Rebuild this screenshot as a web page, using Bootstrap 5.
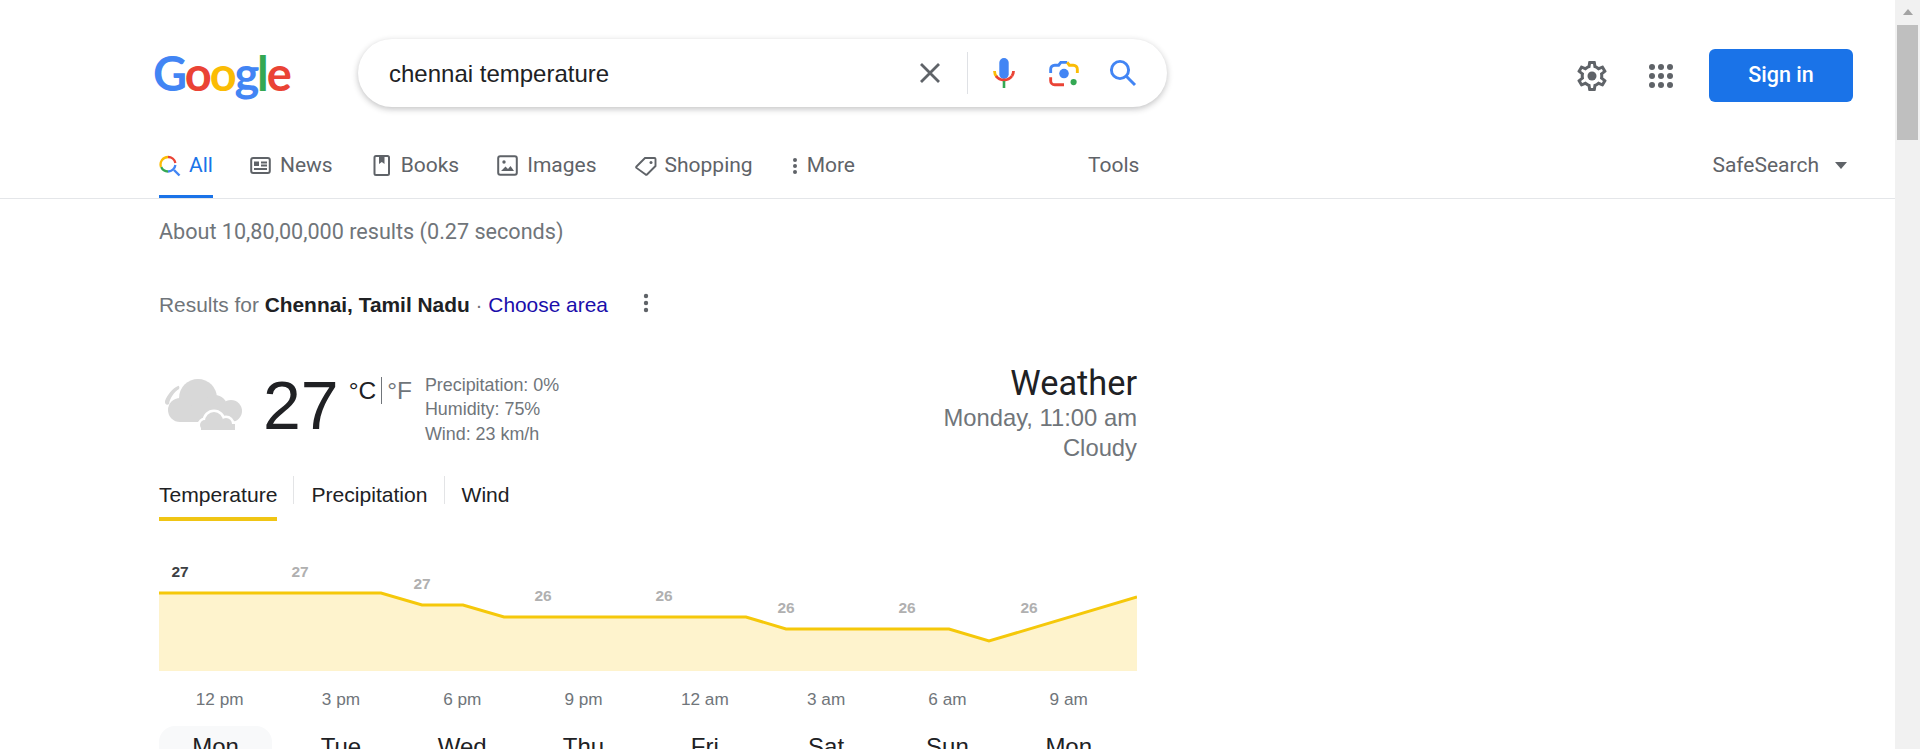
<!DOCTYPE html>
<html lang="en">
<head>
  <meta charset="UTF-8">
  <title>chennai temperature - Google Search</title>
  <link href="https://cdn.jsdelivr.net/npm/bootstrap@5.3.2/dist/css/bootstrap.min.css" rel="stylesheet">
  <style>
    html, body { height: 749px; overflow: hidden; }
    body { font-family: "Liberation Sans", Arial, sans-serif; color: #202124; background: #fff; }
    a { text-decoration: none; }

    .top-row { height: 120px; padding: 39px 67px 0 153px; align-items: flex-start; }
    .g-logo { width: 137px; height: 68px; margin-right: 68px; font-family: "Lato", sans-serif; font-size: 47px; font-weight: 700; line-height: 68px; letter-spacing: -2.1px; }
    .c-blue { color: #4285f4; } .c-red { color: #ea4335; } .c-yellow { color: #fbbc05; } .c-green { color: #34a853; }
    .search-pill { width: 809px; height: 68px; border-radius: 34px; background: #fff; box-shadow: 0 2px 6px rgba(32,33,36,.28); padding: 0 30px 0 31px; }
    .search-text { font-size: 24px; color: #202124; flex: 1; margin-top: 1px; }
    .pill-sep { width: 1px; height: 42px; background: #dfe1e5; margin: 0 23px 0 26px; }
    .lens-gap { margin-left: 31px; }
    .glass-gap { margin-left: 29px; }
    .top-right { margin-left: auto; margin-top: 10px; height: 53px; }
    .grid-gap { margin-left: 38px; }
    .signin-btn { width: 144px; height: 53px; margin-left: 35px; background: #1a73e8; color: #fff; border: 0; border-radius: 6px; font-family: "Roboto", sans-serif; font-size: 21.5px; font-weight: 500; }

    .tab-strip { height: 79px; padding: 0 46px 0 159px; border-bottom: 1px solid #e4e6e9; margin-right: 25px; font-family: "Roboto", sans-serif; font-size: 21px; color: #5f6368; }
    .tab-item { height: 78px; padding-top: 31px; color: #5f6368; white-space: nowrap; line-height: 28px; }
    .tab-on { color: #1a73e8; border-bottom: 3px solid #1a73e8; }
    .tab-strip svg { flex: none; }
    .tools-item { margin-left: auto; }
    .tab-news { margin-left: 37px; gap: 9px; } .tab-news svg { margin-top: 5px; }
    .tab-books { margin-left: 40px; gap: 10px; } .tab-books svg { margin-top: 4px; }
    .tab-images { margin-left: 38px; gap: 9px; } .tab-images svg { margin-top: 4px; }
    .tab-shop { margin-left: 38px; gap: 8px; } .tab-shop svg { margin-top: 5px; }
    .tab-more { margin-left: 39px; gap: 9px; } .tab-more svg { margin-top: 6px; }
    .tab-tools { margin-left: 233px; }
    .safe-caret { margin: 11px 2px 0 16px; }

    .main-col { width: 978px; margin-left: 159px; }
    .stats-line { margin-top: 18px; height: 30px; line-height: 30px; color: #70757a; font-family: "Roboto", sans-serif; font-size: 21.6px; white-space: nowrap; }
    .loc-line { margin-top: 43px; height: 30px; font-size: 20.9px; color: #70757a; }
    .loc-line b { color: #202124; }
    .loc-line a { color: #1a0dab; }
    .loc-dots { margin: -4px 0 0 35px; }
    .wx-head { margin-top: 45px; height: 105px; }
    .wx-cloud { flex: none; margin: 13px 0 0 4px; }
    .wx-temp { font-size: 68px; line-height: 80px; color: #202124; margin: 0 0 0 18px; }
    .wx-unit { font-size: 24.5px; line-height: 26px; margin-top: 13px; margin-left: 10px; color: #202124; }
    .wx-unit span + span { border-left: 1px solid #70757a; color: #70757a; margin-left: 5px; padding-left: 5px; }
    .wx-stats { margin-left: 13px; margin-top: 8px; color: #70757a; font-size: 17.9px; line-height: 24.4px; }
    .wx-title { text-align: right; color: #70757a; font-size: 23.8px; line-height: 30px; margin-top: -2px; }
    .wx-title div:first-child { font-family: "Roboto", sans-serif; color: #202124; font-size: 34.3px; line-height: 40px; }

    .chart-tabs { height: 51px; font-size: 21.1px; color: #202124; }
    .ctab { height: 51px; line-height: 34px; padding-top: 8px; }
    .ctab-on { border-bottom: 4px solid #f0c514; }
    .ctab-sep { width: 1px; height: 28px; background: #e3e4e6; margin: 6px 17px 0 16px; }
    .chart-box { display: block; }
    .hours-row { font-size: 17.2px; color: #70757a; margin-top: 16px; height: 24px; line-height: 24px; }
    .hours-row > div, .days-row > div { width: 121.3px; text-align: center; }
    .days-row { margin-top: 15px; font-size: 24px; color: #202124; }
    .day-cell { padding-top: 6px; height: 100px; line-height: 30px; }
    .day-now { background: #f8f9fa; border-radius: 16px; width: 113px !important; margin-right: 8.3px; }

    .fake-scroll { position: fixed; top: 0; right: 0; width: 25px; height: 749px; background: #f1f1f1; }
    .fake-thumb { position: absolute; top: 25px; right: 2px; width: 21px; height: 115px; background: #bfbfbf; }
    .fake-arrow { position: absolute; top: 9px; left: 8px; width: 0; height: 0; border-left: 5.5px solid transparent; border-right: 5.5px solid transparent; border-bottom: 6px solid #a3a3a3; }
  </style>
</head>
<body>

  <!-- Search bar -->
  <div class="top-row d-flex">
    <div class="g-logo"><span class="c-blue">G</span><span class="c-red">o</span><span class="c-yellow">o</span><span class="c-blue">g</span><span class="c-green">l</span><span class="c-red">e</span></div>
    <div class="search-pill d-flex align-items-center">
      <div class="search-text">chennai temperature</div>
      <svg width="22" height="22" viewBox="0 0 22 22"><path d="M2 2l18 18M20 2L2 20" stroke="#5f6368" stroke-width="2.8" fill="none"/></svg>
      <div class="pill-sep"></div>
      <svg width="26" height="32" viewBox="0 0 26 32">
        <rect x="8.3" y="1" width="9.4" height="21" rx="4.7" fill="#4285f4"/>
        <path d="M3.500 14c0 2.500 .8 4.500 2.400 6" stroke="#fbbc05" stroke-width="2.800" fill="none"/>
        <path d="M5 19c2 2.700 4.800 4 8 4s6-1.300 8-4" stroke="#ea4335" stroke-width="2.800" fill="none"/>
        <path d="M22.500 14c0 2-.5 3.500-1.500 5" stroke="#ea4335" stroke-width="2.800" fill="none"/>
        <rect x="11.700" y="24" width="2.600" height="7" fill="#34a853"/>
      </svg>
      <svg class="lens-gap" width="32" height="32" viewBox="0 0 30 30">
        <circle cx="15" cy="15.500" r="4.500" fill="#4285f4"/>
        <circle cx="24" cy="23.500" r="2.900" fill="#34a853"/>
        <path d="M2.500 15v-3.500c0-2.200 1.600-3.800 3.800-3.800H10l2-2.700h6" stroke="#4285f4" stroke-width="2.700" fill="none"/>
        <path d="M18 5l2 2.700h3.700c2.200 0 3.800 1.600 3.800 3.800V15" stroke="#fbbc05" stroke-width="2.700" fill="none"/>
        <path d="M2.500 19v3.200c0 2.200 1.600 3.800 3.800 3.800H15" stroke="#ea4335" stroke-width="2.700" fill="none"/>
      </svg>
      <svg class="glass-gap" width="28" height="28" viewBox="0 0 28 28"><circle cx="11" cy="11" r="8.600" stroke="#4285f4" stroke-width="2.900" fill="none"/><path d="M17.300 17.300l8.700 8.700" stroke="#4285f4" stroke-width="3" fill="none"/></svg>
    </div>
    <div class="top-right d-flex align-items-center">
      <svg width="36" height="36" viewBox="0 0 24 24" fill="#5f6368"><path d="M19.430 12.980c.04-.32.07-.64.07-.98 0-.34-.03-.66-.07-.98l2.110-1.650c.19-.15.24-.42.12-.64l-2-3.460c-.09-.16-.26-.25-.44-.25-.06 0-.12.01-.17.03l-2.490 1c-.52-.4-1.080-.73-1.690-.98l-.38-2.650C14.460 2.180 14.250 2 14 2h-4c-.25 0-.46.18-.49.42l-.38 2.650c-.61.25-1.170.59-1.690.98l-2.490-1c-.06-.02-.12-.03-.18-.03-.17 0-.34.09-.43.25l-2 3.460c-.13.22-.07.49.12.64l2.110 1.650c-.04.32-.07.65-.07.98 0 .33.03.66.07.98l-2.110 1.650c-.19.15-.24.42-.12.64l2 3.460c.09.16.26.25.44.25.06 0 .12-.01.17-.03l2.490-1c.52.4 1.080.73 1.690.98l.38 2.650c.03.24.24.42.49.42h4c.25 0 .46-.18.49-.42l.38-2.650c.61-.25 1.170-.59 1.690-.98l2.490 1c.06.02.12.03.18.03.17 0 .34-.09.43-.25l2-3.460c.12-.22.07-.49-.12-.64l-2.110-1.650zm-1.980-1.710c.04.31.05.52.05.73 0 .21-.02.43-.05.73l-.14 1.130.89.7 1.080.84-.7 1.210-1.270-.51-1.040-.42-.9.68c-.43.32-.84.56-1.250.73l-1.060.43-.16 1.130-.2 1.350h-1.400l-.19-1.350-.16-1.130-1.060-.43c-.43-.18-.83-.41-1.230-.71l-.91-.7-1.060.43-1.270.51-.7-1.210 1.080-.84.89-.7-.14-1.130c-.03-.31-.05-.54-.05-.74s.02-.43.05-.73l.14-1.130-.89-.7-1.080-.84.7-1.210 1.270.51 1.040.42.9-.68c.43-.32.84-.56 1.250-.73l1.060-.43.16-1.130.2-1.350h1.390l.19 1.350.16 1.130 1.060.43c.43.18.83.41 1.230.71l.91.7 1.060-.43 1.270-.51.7 1.210-1.070.85-.89.7.14 1.130z"/><circle cx="12" cy="12" r="3"/></svg>
      <svg class="grid-gap" width="26" height="26" viewBox="0 0 26 26" fill="#5f6368">
        <circle cx="4" cy="4" r="3"/><circle cx="13" cy="4" r="3"/><circle cx="22" cy="4" r="3"/>
        <circle cx="4" cy="13" r="3"/><circle cx="13" cy="13" r="3"/><circle cx="22" cy="13" r="3"/>
        <circle cx="4" cy="22" r="3"/><circle cx="13" cy="22" r="3"/><circle cx="22" cy="22" r="3"/>
      </svg>
      <button class="btn signin-btn">Sign in</button>
    </div>
  </div>

  <!-- Tabs -->
  <div class="tab-strip d-flex">
    <a class="tab-item tab-on d-flex gap-2" href="#">
      <svg class="mt-1" width="22" height="22" viewBox="0 0 22 22" fill="none">
        <path d="M15 15l5.500 5.500" stroke="#4285f4" stroke-width="2.400"/>
        <path d="M9 2a7.500 7.500 0 0 1 7.400 6" stroke="#ea4335" stroke-width="2.300"/>
        <path d="M16.400 10a7.500 7.500 0 0 1-7.400 6.500" stroke="#4285f4" stroke-width="2.300"/>
        <path d="M9 16.500a7.500 7.500 0 0 1-6.800-4.500" stroke="#34a853" stroke-width="2.300"/>
        <path d="M2 12a7.500 7.500 0 0 1 7-10" stroke="#fbbc05" stroke-width="2.300"/>
      </svg>All
    </a>
    <a class="tab-item d-flex tab-news" href="#">
      <svg width="21" height="19" viewBox="0 0 21 19" fill="none"><rect x="1.200" y="2" width="18.600" height="15" rx="2" stroke="#5f6368" stroke-width="2"/><rect x="4" y="5.500" width="5" height="4.500" fill="#5f6368"/><path d="M11 6.500h6M11 9.500h6M4 13h13" stroke="#5f6368" stroke-width="1.800"/></svg>News
    </a>
    <a class="tab-item d-flex tab-books" href="#">
      <svg width="18" height="21" viewBox="0 0 18 21" fill="none"><rect x="1.500" y="1" width="14.500" height="19" rx="1.500" stroke="#5f6368" stroke-width="2"/><path d="M6 1h5.500v8l-2.700-2L6 9z" fill="#5f6368"/></svg>Books
    </a>
    <a class="tab-item d-flex tab-images" href="#">
      <svg width="21" height="21" viewBox="0 0 21 21" fill="none"><rect x="1.200" y="1.200" width="18.600" height="18.600" rx="2" stroke="#5f6368" stroke-width="2"/><circle cx="7" cy="7" r="1.700" fill="#5f6368"/><path d="M4 16l4.500-4.500 2.500 2.500 2.500-3 3.500 5z" fill="#5f6368"/></svg>Images
    </a>
    <a class="tab-item d-flex tab-shop" href="#">
      <svg width="22" height="20" viewBox="0 0 22 20" fill="none"><path d="M1.500 10.500L10 2h9.500a1 1 0 0 1 1 1v7L12 18.500a1 1 0 0 1-1.400 0l-9.100-6.600a1 1 0 0 1 0-1.400z" stroke="#5f6368" stroke-width="1.900"/><circle cx="16" cy="6.500" r="1.500" fill="#5f6368"/></svg>Shopping
    </a>
    <a class="tab-item d-flex tab-more" href="#">
      <svg width="6" height="18" viewBox="0 0 6 18" fill="#5f6368"><circle cx="3" cy="3" r="2"/><circle cx="3" cy="9" r="2"/><circle cx="3" cy="15" r="2"/></svg>More
    </a>
    <a class="tab-item tab-tools" href="#">Tools</a>
    <a class="tab-item d-flex align-items-start tools-item" href="#">SafeSearch<svg class="safe-caret" width="12" height="7" viewBox="0 0 12 7" fill="#5f6368"><path d="M0 0h12L6 7z"/></svg></a>
  </div>

  <div class="main-col">
    <div class="stats-line">About 10,80,00,000 results (0.27 seconds)</div>

    <div class="loc-line d-flex align-items-center">
      <div>Results for <b>Chennai, Tamil Nadu</b> · <a href="#">Choose area</a></div>
      <svg class="loc-dots" width="6" height="20" viewBox="0 0 6 20" fill="#5f6368"><circle cx="3" cy="3" r="2.200"/><circle cx="3" cy="10" r="2.200"/><circle cx="3" cy="17" r="2.200"/></svg>
    </div>

    <!-- Current conditions -->
    <div class="wx-head d-flex">
      <svg class="wx-cloud" width="82" height="54" viewBox="0 0 82 54" fill="#d8d8d8">
        <path d="M15 8c-5 2-11 9-13 15-.5 3 2 5 4 3 1-6 5-12 10-15 1-1 0-4-1-3z"/>
        <circle cx="35" cy="20" r="19"/><circle cx="17" cy="32" r="12"/><circle cx="52" cy="29" r="12"/><circle cx="68" cy="33" r="11"/>
        <rect x="17" y="28" width="51" height="16"/>
        <g stroke="#fff" stroke-width="5"><circle cx="51" cy="43" r="9"/><circle cx="63" cy="46" r="6"/><circle cx="42" cy="47" r="5"/><rect x="38" y="46" width="34" height="6"/></g>
        <circle cx="51" cy="43" r="9"/><circle cx="63" cy="46" r="6"/><circle cx="42" cy="47" r="5"/><rect x="38" y="46" width="34" height="6"/>
      </svg>
      <div class="wx-temp">27</div>
      <div class="wx-unit"><span>°C</span><span>°F</span></div>
      <div class="wx-stats">
        <div>Precipitation: 0%</div>
        <div>Humidity: 75%</div>
        <div>Wind: 23 km/h</div>
      </div>
      <div class="wx-title ms-auto">
        <div>Weather</div>
        <div>Monday, 11:00 am</div>
        <div>Cloudy</div>
      </div>
    </div>

    <!-- Chart tabs -->
    <div class="chart-tabs d-flex">
      <div class="ctab ctab-on">Temperature</div>
      <div class="ctab-sep"></div>
      <div class="ctab">Precipitation</div>
      <div class="ctab-sep"></div>
      <div class="ctab">Wind</div>
    </div>

    <svg class="chart-box" width="978" height="150" viewBox="0 0 978 150" font-family="Liberation Sans, Arial, sans-serif" font-size="15.5" font-weight="700" text-anchor="middle" fill="#b0b0b0">
      <polygon points="0,72 222,72 263,84 304,84 345,96 587,96 627,108 790,108 830,120 978,76 978,150 0,150" fill="#fef3cd"/>
      <polyline points="0,72 222,72 263,84 304,84 345,96 587,96 627,108 790,108 830,120 978,76" fill="none" stroke="#f5c80a" stroke-width="3"/>
      <text x="21" y="56" fill="#3c4043">27</text>
      <text x="141" y="56">27</text>
      <text x="263" y="68">27</text>
      <text x="384" y="80">26</text>
      <text x="505" y="80">26</text>
      <text x="627" y="92">26</text>
      <text x="748" y="92">26</text>
      <text x="870" y="92">26</text>
    </svg>

    <div class="hours-row d-flex">
      <div>12 pm</div><div>3 pm</div><div>6 pm</div><div>9 pm</div><div>12 am</div><div>3 am</div><div>6 am</div><div>9 am</div>
    </div>
    <div class="days-row d-flex">
      <div class="day-cell day-now">Mon</div><div class="day-cell">Tue</div><div class="day-cell">Wed</div><div class="day-cell">Thu</div><div class="day-cell">Fri</div><div class="day-cell">Sat</div><div class="day-cell">Sun</div><div class="day-cell">Mon</div>
    </div>
  </div>

  <!-- Browser scrollbar -->
  <div class="fake-scroll"><div class="fake-arrow"></div><div class="fake-thumb"></div></div>

</body>
</html>
